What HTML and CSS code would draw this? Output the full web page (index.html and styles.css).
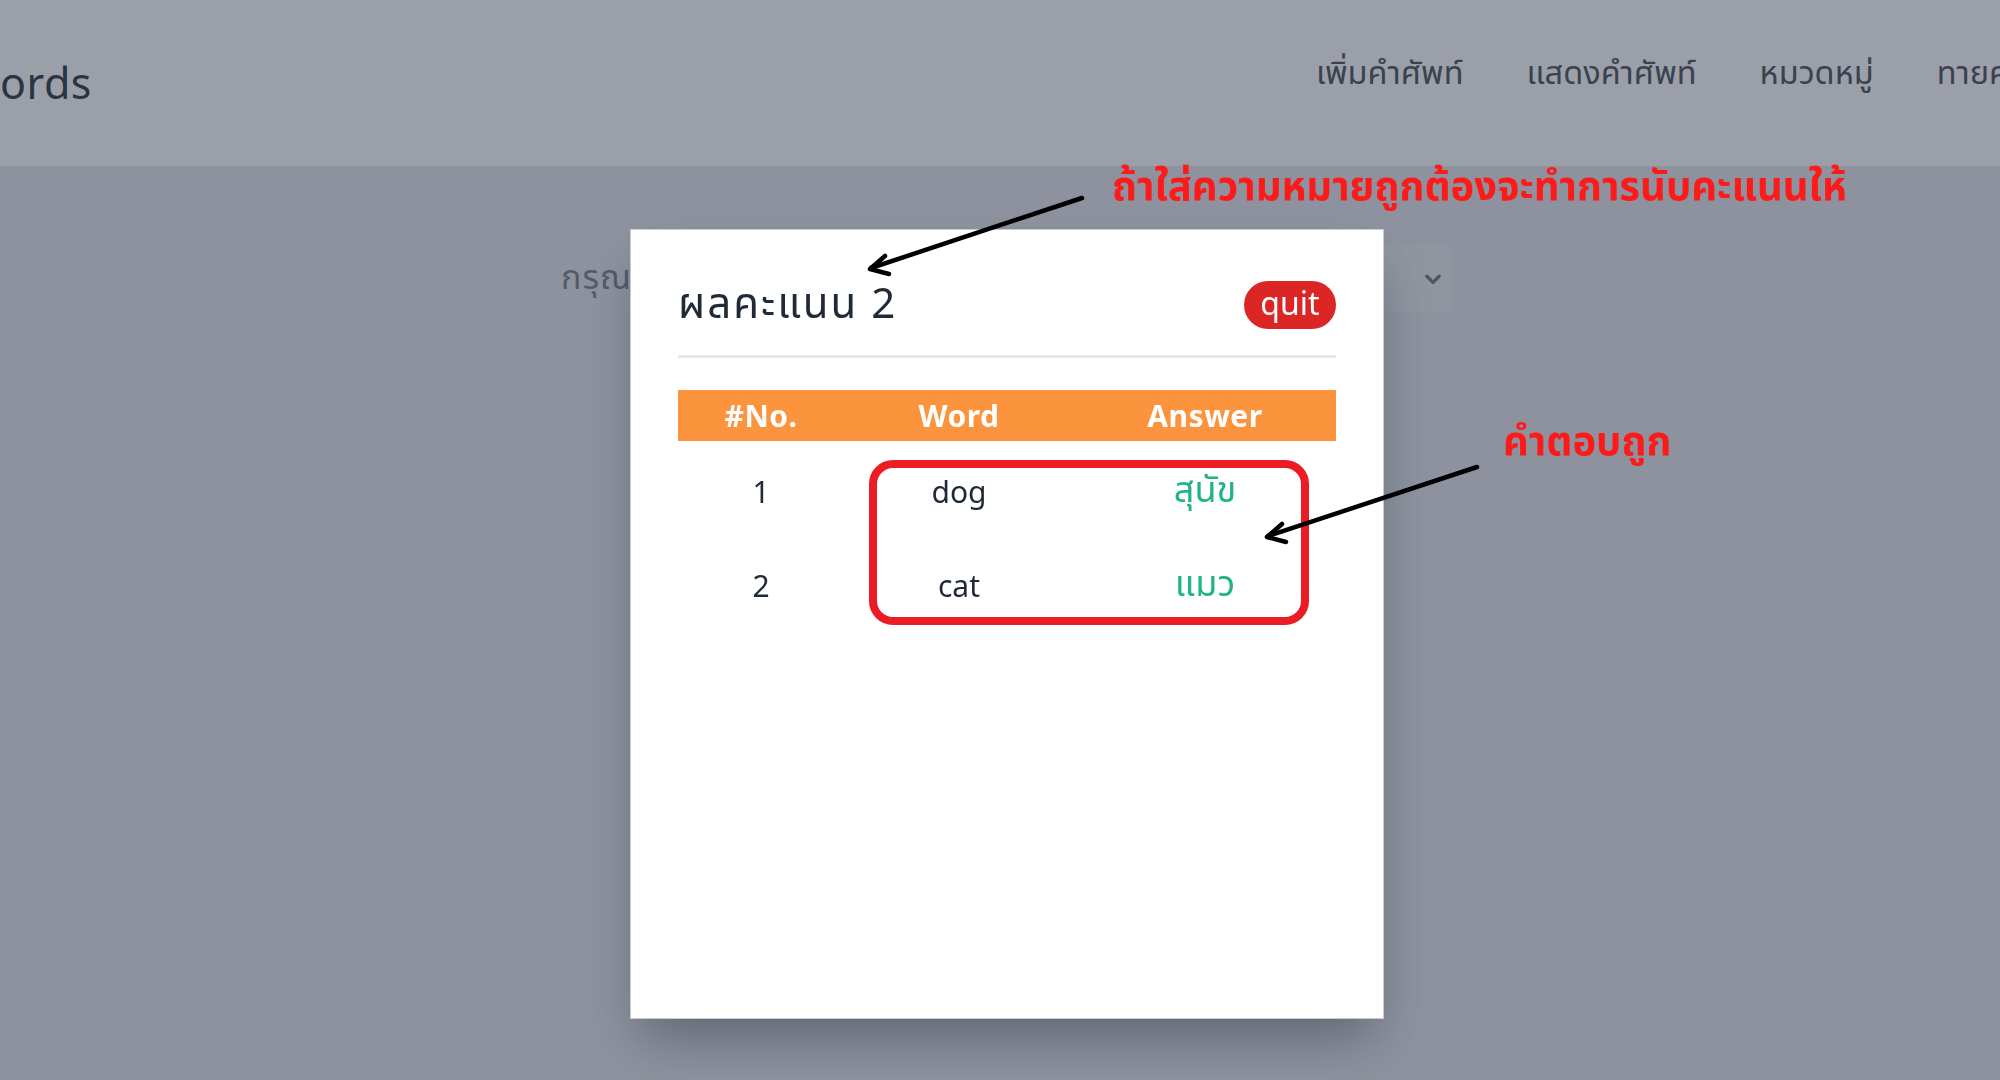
FILE: index.html
```html
<!DOCTYPE html>
<html lang="th">
<head>
<meta charset="utf-8">
<title>Words</title>
<link rel="stylesheet" href="styles.css">
</head>
<body>
<header class="topbar">
  <div class="logo">ords</div>
  <nav class="nav">
    <a class="nav-item">เพิ่มคำศัพท์</a>
    <a class="nav-item">แสดงคำศัพท์</a>
    <a class="nav-item">หมวดหมู่</a>
    <a class="nav-item">ทายคำศัพท์</a>
  </nav>
</header>
<main class="page">
  <div class="picker">
    <span class="picker-label">กรุณาเลือกหมวดหมู่</span>
    <div class="select">
      <span class="select-value">สัตว์</span>
      <svg class="chev" viewBox="0 0 16 16" width="20" height="20"><path d="M3.5 6 L8 10.5 L12.5 6" fill="none" stroke="currentColor" stroke-width="2.4" stroke-linecap="round" stroke-linejoin="round"/></svg>
    </div>
  </div>
</main>
<div class="backdrop"></div>
<section class="modal">
  <div class="modal-head">
    <h2 class="modal-title">ผลคะแนน 2</h2>
    <button class="quit">quit</button>
  </div>
  <hr class="sep">
  <table class="results">
    <thead>
      <tr><th class="c1">#No.</th><th class="c2">Word</th><th class="c3">Answer</th></tr>
    </thead>
    <tbody>
      <tr><td>1</td><td>dog</td><td class="ok">สุนัข</td></tr>
      <tr><td>2</td><td>cat</td><td class="ok">แมว</td></tr>
    </tbody>
  </table>
</section>
<div class="note note-top">ถ้าใส่ความหมายถูกต้องจะทำการนับคะแนนให้</div>
<div class="note note-side">คำตอบถูก</div>
<div class="mark-box"></div>
<svg class="arrows" width="2000" height="1080" viewBox="0 0 2000 1080">
  <g fill="none" stroke="#000" stroke-width="4.5" stroke-linecap="round" stroke-linejoin="round">
    <path d="M1082 198 L871 268"/>
    <path d="M885 256 L870 269 L889 274"/>
    <path d="M1477 467 L1268 536"/>
    <path d="M1282 524 L1267 537 L1286 542"/>
  </g>
</svg>
</body>
</html>
```
FILE: styles.css
```css
* { box-sizing: border-box; }
html, body {
  margin: 0;
  width: 2000px;
  height: 1080px;
  overflow: hidden;
}
body {
  background: #f3f4f6;
  font-family: "Noto Sans", "Noto Sans Thai", "Loma", "Garuda", sans-serif;
  color: #1f2937;
  position: relative;
}
.topbar {
  position: relative;
  z-index: 5;
  height: 166px;
  background: #9b9fa8;
  display: grid;
  grid-template-columns: 1316px auto;
  align-items: start;
}
.logo {
  font-size: 43px;
  line-height: 1;
  color: #2b3443;
  padding-top: 61px;
  letter-spacing: 0.5px;
}
.nav {
  display: flex;
  gap: 63px;
  white-space: nowrap;
  padding-top: 50px;
}
.nav-item {
  font-size: 32.5px;
  line-height: 44px;
  color: #3a4250;
}
.page {
  padding: 79px 0 0 561px;
}
.picker {
  width: 891px;
  display: flex;
  align-items: center;
}
.picker-label {
  font-size: 34px;
  color: #111827;
  letter-spacing: 1px;
}
.select {
  width: 480px;
  height: 67px;
  background: #ffffff;
  border-radius: 10px;
  display: flex;
  align-items: center;
  justify-content: space-between;
  padding: 0 8px 0 18px;
  color: #111827;
  font-size: 28px;
  margin-left: auto;
}
.chev { width: 22px; height: 22px; color: #000; }
.backdrop {
  position: fixed;
  inset: 0;
  z-index: 2;
  background: rgba(107, 114, 128, 0.75);
}
.modal {
  position: fixed;
  z-index: 10;
  left: 630px;
  top: 229px;
  width: 754px;
  height: 790px;
  background: #fff;
  border: 1px solid #c7cbd3;
  box-shadow: 0 28px 50px -10px rgba(30, 35, 50, 0.4);
  padding: 51px 47px 0;
}
.modal-head {
  display: flex;
  align-items: center;
  justify-content: space-between;
  height: 48px;
}
.modal-title {
  margin: 0;
  font-weight: 400;
  font-size: 42px;
  letter-spacing: 2px;
  color: #1f2937;
}
.quit {
  width: 92px;
  height: 48px;
  border: 0;
  border-radius: 24px;
  background: #dc2626;
  color: #fff;
  font-family: inherit;
  font-size: 32px;
  line-height: 1;
  padding: 0 0 4px;
}
.sep {
  border: 0;
  height: 3px;
  background: #e5e7eb;
  margin: 26px 0 32px;
}
.results {
  width: 100%;
  border-collapse: collapse;
  text-align: center;
}
.results th {
  background: #fb943c;
  color: #fff;
  font-size: 30px;
  font-weight: 700;
  height: 51px;
  padding: 0;
  letter-spacing: 0.5px;
}
.c1 { width: 166px; }
.c2 { width: 230px; }
.results td {
  height: 96px;
  padding: 0;
  font-size: 30px;
  color: #1f2937;
}
.results tbody tr:first-child td { padding-top: 4px; }
.results td.ok { color: #1fb387; font-size: 36px; }
.note {
  position: absolute;
  z-index: 20;
  color: #ff1a1a;
  font-weight: 700;
  white-space: nowrap;
}
.note-top {
  left: 1112px;
  top: 158px;
  font-size: 40px;
  line-height: 54px;
}
.note-side {
  left: 1503px;
  top: 413px;
  font-size: 40px;
  line-height: 54px;
}
.mark-box {
  position: absolute;
  z-index: 20;
  left: 869px;
  top: 460px;
  width: 440px;
  height: 165px;
  border: 8px solid #ec1c24;
  border-radius: 24px;
}
.arrows {
  position: absolute;
  left: 0;
  top: 0;
  z-index: 25;
}
```
